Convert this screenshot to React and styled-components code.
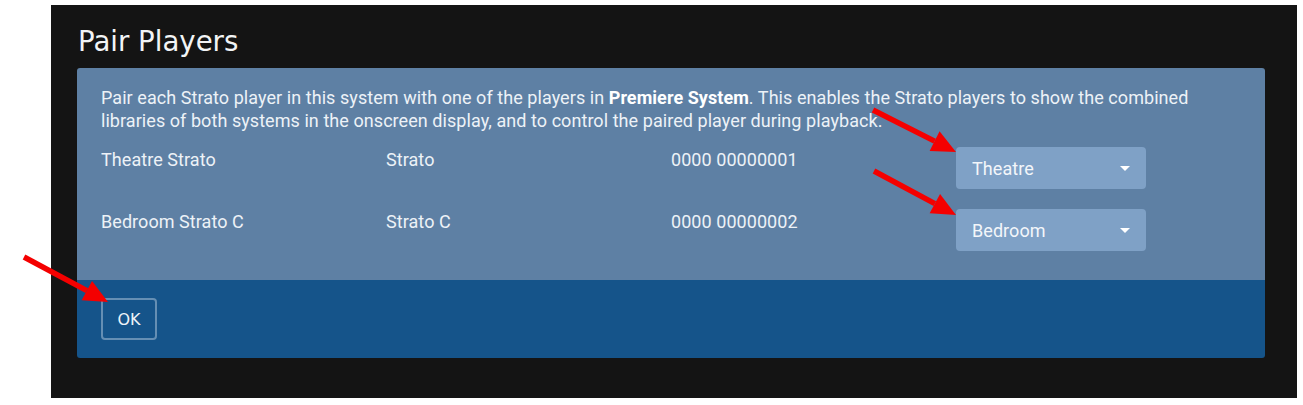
import React from 'react';
import styled, { createGlobalStyle } from 'styled-components';

const Global = createGlobalStyle`
  html, body {
    margin: 0;
    padding: 0;
    background: #fff;
  }
  body {
    font-family: Roboto, "Liberation Sans", sans-serif;
  }
`;

const Page = styled.div`
  position: relative;
  width: 1303px;
  height: 405px;
  overflow: hidden;
`;

const Screen = styled.div`
  margin: 5px 6px 0 51px;
  height: 393px;
  background: #141414;
  padding: 0 32px 0 26px;
  box-sizing: border-box;
`;

const Title = styled.h1`
  margin: 0;
  padding: 20px 0 0 1px;
  height: 63px;
  box-sizing: border-box;
  font-family: "DejaVu Sans", sans-serif;
  font-weight: normal;
  font-size: 27.6px;
  line-height: 34px;
  color: #f2f4f6;
`;

const Panel = styled.div`
  border-radius: 3px;
  overflow: hidden;
  color: #edf2f7;
  font-size: 18px;
  line-height: 23px;
  letter-spacing: 0.06px;
`;

const Body = styled.div`
  background: #5e80a4;
  padding: 18px 24px 28px;
`;

const Intro = styled.p`
  margin: 0 0 12px;
  b {
    font-weight: bold;
    color: #fff;
  }
`;

const Row = styled.div`
  display: grid;
  grid-template-columns: repeat(4, 1fr);
  height: 62px;
  &:last-child {
    height: 46px;
  }
`;

const Cell = styled.div`
  padding-top: 4px;
`;

const Select = styled.div`
  margin-top: -1px;
  width: 190px;
  height: 42px;
  box-sizing: border-box;
  background: #7fa1c6;
  border-radius: 4px;
  display: flex;
  align-items: center;
  justify-content: space-between;
  padding: 1px 16px 0 16px;
  color: #f3f6fa;
`;

const Caret = styled.span`
  width: 0;
  height: 0;
  border-left: 5px solid transparent;
  border-right: 5px solid transparent;
  border-top: 5px solid #fff;
`;

const Footer = styled.div`
  background: #15548a;
  height: 78px;
  padding: 18px 24px;
  box-sizing: border-box;
`;

const OkButton = styled.button`
  width: 56px;
  height: 42px;
  box-sizing: border-box;
  background: transparent;
  border: 2px solid rgba(200, 215, 230, 0.45);
  border-radius: 4px;
  color: #eef3f8;
  font-family: "DejaVu Sans", sans-serif;
  font-size: 16px;
  padding: 0;
`;

const Arrows = styled.svg`
  position: absolute;
  left: 0;
  top: 0;
  pointer-events: none;
`;

const players = [
  { name: 'Theatre Strato', model: 'Strato', serial: '0000 00000001', pair: 'Theatre' },
  { name: 'Bedroom Strato C', model: 'Strato C', serial: '0000 00000002', pair: 'Bedroom' },
];

const Arrow = ({ x1, y1, x2, y2 }) => {
  const a = Math.atan2(y2 - y1, x2 - x1);
  const len = 24;
  const half = 11;
  const bx = x2 - len * Math.cos(a);
  const by = y2 - len * Math.sin(a);
  const px = -Math.sin(a) * half;
  const py = Math.cos(a) * half;
  return (
    <g fill="#f40000" stroke="#f40000">
      <line x1={x1} y1={y1} x2={bx} y2={by} strokeWidth="5.5" />
      <polygon points={`${x2},${y2} ${bx + px},${by + py} ${bx - px},${by - py}`} stroke="none" />
    </g>
  );
};

export default function App() {
  return (
    <Page>
      <Global />
      <Screen>
        <Title>Pair Players</Title>
        <Panel>
          <Body>
            <Intro>
              Pair each Strato player in this system with one of the players in <b>Premiere System</b>. This enables the Strato players to show the combined
              <br />
              libraries of both systems in the onscreen display, and to control the paired player during playback.
            </Intro>
            {players.map((p) => (
              <Row key={p.name}>
                <Cell>{p.name}</Cell>
                <Cell>{p.model}</Cell>
                <Cell>{p.serial}</Cell>
                <Cell>
                  <Select>
                    {p.pair}
                    <Caret />
                  </Select>
                </Cell>
              </Row>
            ))}
          </Body>
          <Footer>
            <OkButton>OK</OkButton>
          </Footer>
        </Panel>
      </Screen>
      <Arrows width="1303" height="405">
        <Arrow x1={873} y1={110} x2={956} y2={152} />
        <Arrow x1={874} y1={171} x2={956} y2={215} />
        <Arrow x1={24} y1={257} x2={108} y2={302} />
      </Arrows>
    </Page>
  );
}
